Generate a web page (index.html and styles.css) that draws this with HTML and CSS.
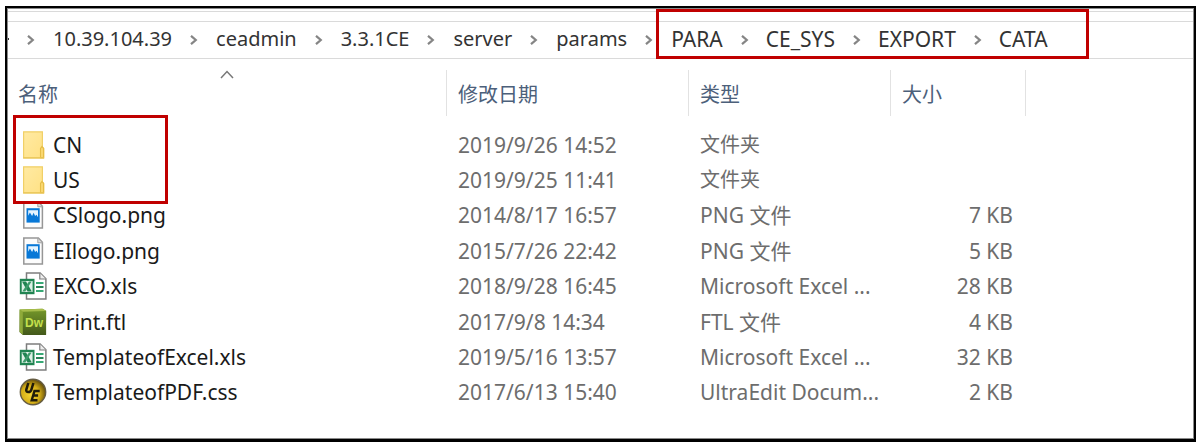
FILE: index.html
```html
<!DOCTYPE html>
<html lang="zh-CN">
<head>
<meta charset="utf-8">
<title>CATA</title>
<link rel="stylesheet" href="styles.css">
</head>
<body>
<svg class="defs" aria-hidden="true">
  <defs>
    <linearGradient id="g-folder" x1="0" y1="0" x2="1" y2="1"><stop offset="0" stop-color="#ffeaa3"/><stop offset="1" stop-color="#ffe184"/></linearGradient>
    <linearGradient id="g-dw" x1="0" y1="0" x2="0" y2="1"><stop offset="0" stop-color="#75982a"/><stop offset="1" stop-color="#43591a"/></linearGradient>
    <radialGradient id="g-ue" cx=".4" cy=".6" r=".65"><stop offset="0" stop-color="#f3d333"/><stop offset=".55" stop-color="#d5ae17"/><stop offset="1" stop-color="#57430a"/></radialGradient>
    <symbol id="chevron" viewBox="0 0 8 10"><path d="M1 .8 5.8 5 1 9.2" fill="none" stroke="#858585" stroke-width="2.2"/></symbol>
    <symbol id="folder" viewBox="0 0 28 28">
      <path d="M4.6.8h18.8v15l1.4 1.6v9.4H4.6z" fill="url(#g-folder)" stroke="#f1d067" stroke-width="1.2"/>
      <path d="M21.6 26.6v-9.2l1.4-1.8 1.4 1.8v9.2z" fill="#ffe07d" stroke="#e6bd47" stroke-width="1.3"/>
      <path d="M4.2 26.9h20.8" stroke="#e9c455" stroke-width="1.2"/>
    </symbol>
    <symbol id="picture" viewBox="0 0 28 28">
      <path d="M4.8.9h14.6l4 4.3v21.9H4.8z" fill="#fcfcfc" stroke="#969696" stroke-width="1.5"/>
      <path d="M18.8 1v4.8h4.8z" fill="#ddd" stroke="#a0a0a0"/>
      <path d="M7.5 7.2h13.2v14.4H7.5z" fill="#0878d7"/>
      <path d="M9.2 9.2h9.8v7l-1.5-2.5-1.4 1.2-1.5-3.1-1.5 3.2-2.2-3.5-1.7 3.2z" fill="#e5f4ff"/>
    </symbol>
    <symbol id="excel" viewBox="0 0 28 28">
      <path d="M7.5.9h13.6l5.8 6v20H7.5z" fill="#fff" stroke="#7d7d7d" stroke-width="1.5"/>
      <path d="M20.8 1v6h6" fill="#eee" stroke="#7d7d7d" stroke-width="1.2"/>
      <path d="M17 11h7.5M17 19h7.5" stroke="#37a875" stroke-width="1.9"/>
      <path d="M17 15h7.5" stroke="#1e7e50" stroke-width="1.9"/>
      <path d="M.8 6.8h14.7v15.4H.8z" fill="#218452"/>
      <path d="M2.7 9h10.9v11H2.7z" fill="#dff0e7"/>
      <path d="M3 9.4h4l5.8 10.2H8.6z" fill="#218452"/>
      <path d="M12.6 9.4H9.9L3.3 19.6h3z" fill="#3d9a6b"/>
    </symbol>
    <symbol id="dreamweaver" viewBox="0 0 28 28">
      <path d="m.5 1.5 23-.8 3.7 2-.1 24.2H3.8L.5 24z" fill="url(#g-dw)"/>
      <path d="m.8 1.6 3 2.2v22.9L.7 24z" fill="#8faa39"/>
      <path d="m.8 1.4 22.7-.6 3.5 2.1-23.2.9z" fill="#a7bd4b"/>
      <text x="6" y="19.3" class="dw-mark">Dw</text>
    </symbol>
    <symbol id="ultraedit" viewBox="0 0 28 28">
      <circle cx="14" cy="14" r="12.7" fill="url(#g-ue)" stroke="#655c42" stroke-width="1.4"/>
      <path d="m9.3 5-2 6.6c-.8 3.2 4.1 3.3 5 .3L14.4 5" fill="none" stroke="#201b0a" stroke-width="2.5"/>
      <path d="M20.7 13h-5.2l-2.8 9.2h5.8M14.3 17.5h4.8" fill="none" stroke="#201b0a" stroke-width="2.4"/>
    </symbol>
  </defs>
</svg>
<main class="window">
  <div class="strip"></div>
  <nav class="address" aria-label="路径">
    <span class="overflow-mark"></span>
    <svg class="sep"><use href="#chevron"/></svg>
    <a href="#">10.39.104.39</a>
    <svg class="sep"><use href="#chevron"/></svg>
    <a href="#">ceadmin</a>
    <svg class="sep"><use href="#chevron"/></svg>
    <a href="#">3.3.1CE</a>
    <svg class="sep"><use href="#chevron"/></svg>
    <a href="#">server</a>
    <svg class="sep"><use href="#chevron"/></svg>
    <a href="#">params</a>
    <svg class="sep"><use href="#chevron"/></svg>
    <div class="marked-path">
      <a href="#">PARA</a>
      <svg class="sep"><use href="#chevron"/></svg>
      <a href="#">CE_SYS</a>
      <svg class="sep"><use href="#chevron"/></svg>
      <a href="#">EXPORT</a>
      <svg class="sep"><use href="#chevron"/></svg>
      <a href="#">CATA</a>
    </div>
  </nav>
  <table class="files">
    <colgroup><col class="col-name"><col class="col-date"><col class="col-type"><col class="col-size"><col></colgroup>
    <thead>
      <tr>
        <th><button type="button">名称<svg class="caret" viewBox="0 0 14 9"><path d="M1 8 7 1.5 13 8" fill="none" stroke="#777" stroke-width="1.5"/></svg></button></th>
        <th><button type="button">修改日期</button></th>
        <th><button type="button">类型</button></th>
        <th><button type="button">大小</button></th>
        <td></td>
      </tr>
    </thead>
    <tbody>
      <tr><td class="marked"><div class="name"><svg><use href="#folder"/></svg>CN</div></td><td>2019/9/26 14:52</td><td class="zh">文件夹</td><td></td><td></td></tr>
      <tr><td><div class="name"><svg><use href="#folder"/></svg>US</div></td><td>2019/9/25 11:41</td><td class="zh">文件夹</td><td></td><td></td></tr>
      <tr><td><div class="name"><svg><use href="#picture"/></svg>CSlogo.png</div></td><td>2014/8/17 16:57</td><td>PNG 文件</td><td class="size">7 KB</td><td></td></tr>
      <tr><td><div class="name"><svg><use href="#picture"/></svg>EIlogo.png</div></td><td>2015/7/26 22:42</td><td>PNG 文件</td><td class="size">5 KB</td><td></td></tr>
      <tr><td><div class="name"><svg><use href="#excel"/></svg>EXCO.xls</div></td><td>2018/9/28 16:45</td><td>Microsoft Excel ...</td><td class="size">28 KB</td><td></td></tr>
      <tr><td><div class="name"><svg><use href="#dreamweaver"/></svg>Print.ftl</div></td><td>2017/9/8 14:34</td><td>FTL 文件</td><td class="size">4 KB</td><td></td></tr>
      <tr><td><div class="name"><svg><use href="#excel"/></svg>TemplateofExcel.xls</div></td><td>2019/5/16 13:57</td><td>Microsoft Excel ...</td><td class="size">32 KB</td><td></td></tr>
      <tr><td><div class="name"><svg><use href="#ultraedit"/></svg>TemplateofPDF.css</div></td><td>2017/6/13 15:40</td><td>UltraEdit Docum...</td><td class="size">2 KB</td><td></td></tr>
    </tbody>
  </table>
</main>
</body>
</html>
```
FILE: styles.css
```css
*, *::before, *::after { box-sizing: border-box; }
body {
  margin: 0;
  padding: 6px 1px 2px 5px;
  min-height: 100vh;
  display: flex;
  background: #fff;
  font: 20px/24px "Noto Sans", "Noto Sans CJK SC", sans-serif;
  color: #1a1a1a;
}
.defs { position: absolute; width: 0; height: 0; }
.dw-mark { font: 700 12px "Liberation Sans", sans-serif; fill: #c4e04d; }
.window {
  flex: 1;
  min-width: 0;
  border: 2px solid #000;
  border-bottom-width: 3px;
  box-shadow: inset 0 0 0 1px #8a8a8a;
}
.strip { height: 14px; margin: 0 1px; padding-top: 3px; border-bottom: 1px solid #dadada; }
.strip::before { content: ""; display: block; height: 1px; background: #dadada; }
.address {
  display: flex;
  align-items: center;
  height: 37px;
  margin: 0 1px;
  padding-bottom: 2px;
  border-bottom: 1px solid #dadada;
  white-space: nowrap;
}
.address a { color: #333; text-decoration: none; }
.overflow-mark { width: 1px; height: 2px; background: #333; }
.sep { flex: none; width: 8px; height: 10px; margin: 2px 18px 0 18px; }
.marked-path { position: relative; display: flex; align-items: center; font-size: 21px; }
.marked-path .sep { margin-right: 17px; }
.marked-path::after {
  content: "";
  position: absolute;
  inset: -18px -41px -8px -15px;
  border: 3px solid #c00000;
  pointer-events: none;
}
.files {
  width: 100%;
  height: 351px;
  table-layout: fixed;
  border-collapse: collapse;
}
.col-name { width: 440px; }
.col-date { width: 242px; }
.col-type { width: 202px; }
.col-size { width: 135px; }
.files td, .files th { padding: 0; text-align: left; font-weight: 400; vertical-align: middle; white-space: nowrap; }
.files thead tr { height: 68px; }
.files th button {
  position: relative;
  display: block;
  width: 100%;
  height: 46px;
  padding: 3px 11px 0;
  border: 0;
  border-right: 1px solid #e2e2e2;
  background: none;
  font: inherit;
  color: #4c607a;
  text-align: left;
}
.caret { position: absolute; top: 0; left: 50%; width: 14px; height: 9px; margin-left: -7px; }
.files tbody td { padding-left: 11px; font-size: 21px; color: #6d6d6d; }
.files tbody td.zh { font-size: 20px; }
.files tbody td.size { padding: 0 13px 0 0; text-align: right; }
.files tbody td .name { display: flex; align-items: center; gap: 6px; padding-left: 1px; color: #1a1a1a; }
.name svg { flex: none; width: 28px; height: 28px; }
.marked { position: relative; }
.marked::after {
  content: "";
  position: absolute;
  top: -12px;
  left: 6px;
  width: 155px;
  height: 89px;
  border: 3px solid #c00000;
  pointer-events: none;
}
```
